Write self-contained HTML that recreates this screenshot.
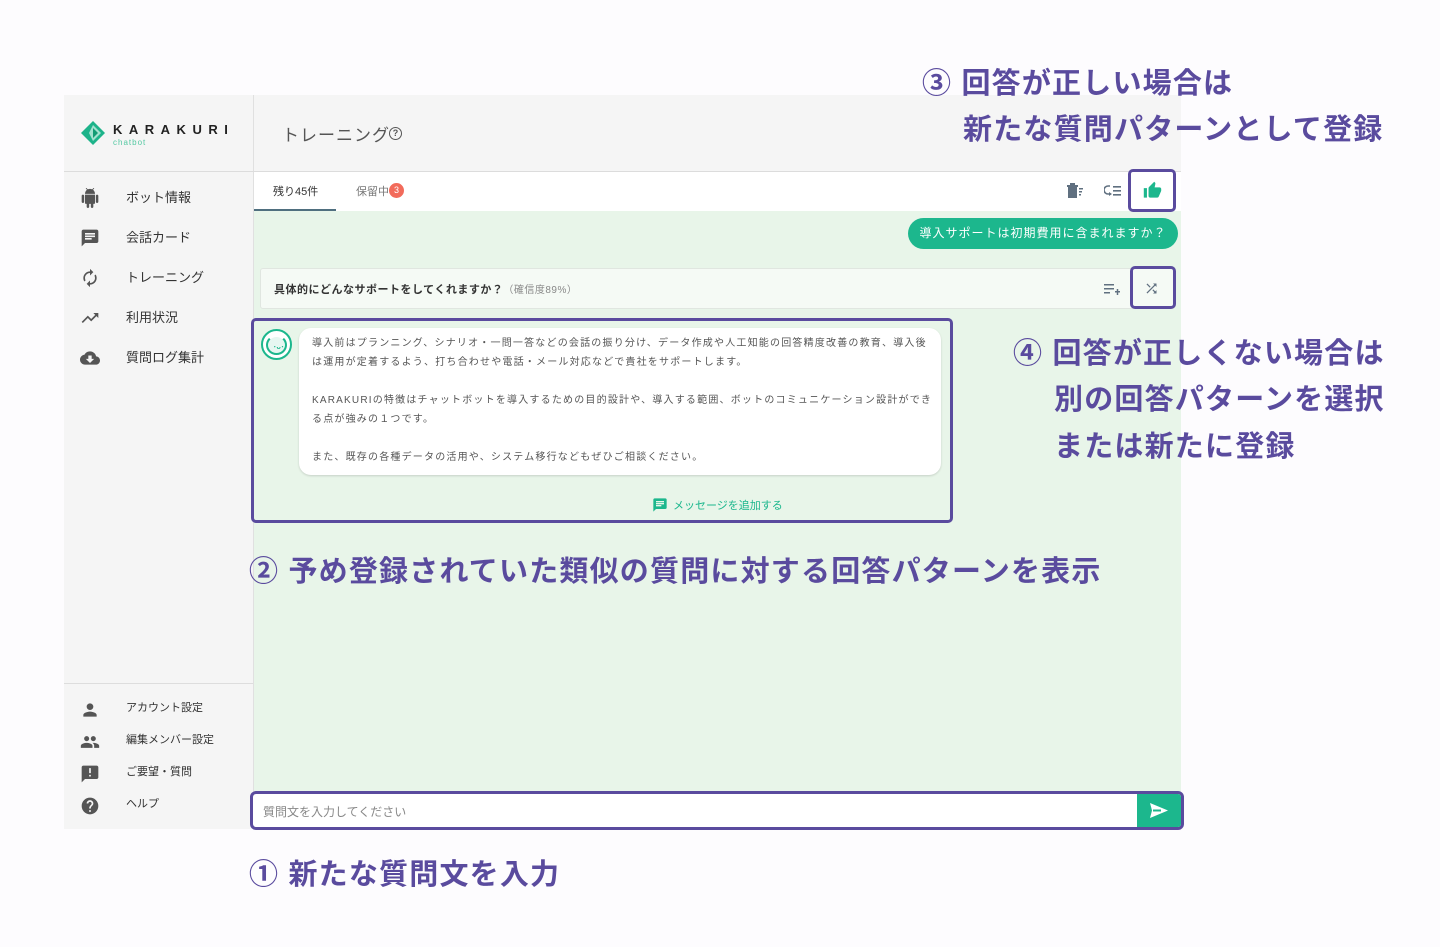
<!DOCTYPE html>
<html><head><meta charset="utf-8"><style>
*{box-sizing:border-box;margin:0;padding:0}
body{width:1440px;height:947px;background:#fdfcfe;position:relative;overflow:hidden;font-family:"Liberation Sans","Noto Sans CJK JP",sans-serif;color:#444}
.a{position:absolute}
.ann{position:absolute;color:#5a4b9e;font-weight:bold;font-size:29px;white-space:nowrap;letter-spacing:1.2px}
.nav{position:absolute;left:0;font-size:13px;color:#333}
.nav svg{position:absolute;left:16px;top:0px}
.nav span{position:absolute;left:62px;top:-1px;white-space:nowrap}
.box{position:absolute;border:3px solid #5a4b9e;border-radius:5px}
</style></head><body>
<div class="a" style="left:64px;top:95px;width:1117px;height:734px;background:#f5f5f5"></div>
<div class="a" style="left:253px;top:95px;width:1px;height:734px;background:#e0e0e0"></div>
<div class="a" style="left:64px;top:171px;width:1117px;height:1px;background:#dcdcdc"></div>
<div class="a" style="left:254px;top:172px;width:927px;height:39px;background:#fff"></div>
<div class="a" style="left:254px;top:211px;width:927px;height:618px;background:#e8f5e9"></div>
<div class="a" style="left:254px;top:209px;width:82px;height:2px;background:#4f6f7f"></div>
<svg class="a" style="left:80px;top:120px" width="26" height="26" viewBox="0 0 26 26"><polygon points="13,1 25,13 13,25 1,13" fill="#1db38a"/><polygon points="13,5 21,13 13,21 9,13" fill="#fff" opacity=".6"/><polygon points="13,8 18,13 13,18" fill="#139b74"/></svg>
<div class="a" style="left:113px;top:122px;font-size:13px;letter-spacing:6.5px;color:#222;font-weight:bold">KARAKURI</div>
<div class="a" style="left:113px;top:138px;font-size:8px;color:#55c9a3;letter-spacing:1px">chatbot</div>
<div class="a" style="left:282px;top:121px;font-size:17px;color:#555;letter-spacing:1px">トレーニング</div>
<div class="a" style="left:389px;top:127px;width:13px;height:13px;border:1.5px solid #555;border-radius:50%;font-size:9px;text-align:center;line-height:10px;color:#555;font-weight:bold">?</div>
<div class="nav" style="top:188px;left:64px"><svg width="20" height="20" viewBox="0 0 24 24"><path fill="#555" d="M6 18c0 .55.45 1 1 1h1v3.5c0 .83.67 1.5 1.5 1.5s1.5-.67 1.5-1.5V19h2v3.5c0 .83.67 1.5 1.5 1.5s1.5-.67 1.5-1.5V19h1c.55 0 1-.45 1-1V8H6v10zM3.5 8C2.67 8 2 8.67 2 9.5v7c0 .83.67 1.5 1.5 1.5S5 17.33 5 16.5v-7C5 8.67 4.33 8 3.5 8zm17 0c-.83 0-1.5.67-1.5 1.5v7c0 .83.67 1.5 1.5 1.5s1.5-.67 1.5-1.5v-7c0-.83-.67-1.5-1.5-1.5zm-4.97-5.84l1.3-1.3c.2-.2.2-.51 0-.71-.2-.2-.51-.2-.71 0l-1.48 1.48C13.85 1.23 12.95 1 12 1c-.96 0-1.86.23-2.66.63L7.85.15c-.2-.2-.51-.2-.71 0-.2.2-.2.51 0 .71l1.31 1.31C6.97 3.26 6 5.01 6 7h12c0-1.99-.97-3.75-2.47-4.84z"/></svg><span>ボット情報</span></div>
<div class="nav" style="top:228px;left:64px"><svg width="20" height="20" viewBox="0 0 24 24"><path fill="#555" d="M20 2H4c-1.1 0-2 .9-2 2v18l4-4h14c1.1 0 2-.9 2-2V4c0-1.1-.9-2-2-2zM6 9h12v2H6V9zm8 5H6v-2h8v2zm4-6H6V6h12v2z"/></svg><span>会話カード</span></div>
<div class="nav" style="top:268px;left:64px"><svg width="20" height="20" viewBox="0 0 24 24"><path fill="#555" d="M12 6v3l4-4-4-4v3c-4.42 0-8 3.58-8 8 0 1.57.46 3.03 1.24 4.26L6.7 14.8c-.45-.83-.7-1.79-.7-2.8 0-3.31 2.69-6 6-6zm6.76 1.74L17.3 9.2c.44.84.7 1.79.7 2.8 0 3.31-2.69 6-6 6v-3l-4 4 4 4v-3c4.42 0 8-3.58 8-8 0-1.57-.46-3.03-1.24-4.26z"/></svg><span>トレーニング</span></div>
<div class="nav" style="top:308px;left:64px"><svg width="20" height="20" viewBox="0 0 24 24"><path fill="#555" d="M16 6l2.29 2.29-4.88 4.88-4-4L2 16.59 3.41 18l6-6 4 4 6.3-6.29L22 12V6z"/></svg><span>利用状況</span></div>
<div class="nav" style="top:348px;left:64px"><svg width="20" height="20" viewBox="0 0 24 24"><path fill="#555" d="M19.35 10.04C18.67 6.59 15.64 4 12 4 9.11 4 6.6 5.64 5.35 8.04 2.34 8.36 0 10.91 0 14c0 3.31 2.69 6 6 6h13c2.76 0 5-2.24 5-5 0-2.64-2.05-4.78-4.65-4.96zM17 13l-5 5-5-5h3V9h4v4h3z"/></svg><span>質問ログ集計</span></div>
<div class="a" style="left:64px;top:683px;width:189px;height:1px;background:#ddd"></div>
<div class="nav" style="top:700px;left:64px;font-size:11px"><svg width="20" height="20" viewBox="0 0 24 24"><path fill="#555" d="M12 12c2.21 0 4-1.79 4-4s-1.79-4-4-4-4 1.79-4 4 1.79 4 4 4zm0 2c-2.67 0-8 1.34-8 4v2h16v-2c0-2.66-5.33-4-8-4z"/></svg><span>アカウント設定</span></div>
<div class="nav" style="top:732px;left:64px;font-size:11px"><svg width="20" height="20" viewBox="0 0 24 24"><path fill="#555" d="M16 11c1.66 0 2.99-1.34 2.99-3S17.66 5 16 5c-1.66 0-3 1.34-3 3s1.34 3 3 3zm-8 0c1.66 0 2.99-1.34 2.99-3S9.66 5 8 5C6.34 5 5 6.34 5 8s1.34 3 3 3zm0 2c-2.33 0-7 1.17-7 3.5V19h14v-2.5c0-2.33-4.67-3.5-7-3.5zm8 0c-.29 0-.62.02-.97.05 1.16.84 1.97 1.97 1.97 3.45V19h6v-2.5c0-2.33-4.67-3.5-7-3.5z"/></svg><span>編集メンバー設定</span></div>
<div class="nav" style="top:764px;left:64px;font-size:11px"><svg width="20" height="20" viewBox="0 0 24 24"><path fill="#555" d="M20 2H4c-1.1 0-2 .9-2 2v18l4-4h14c1.1 0 2-.9 2-2V4c0-1.1-.9-2-2-2zm-7 9h-2V5h2v6zm0 4h-2v-2h2v2z"/></svg><span>ご要望・質問</span></div>
<div class="nav" style="top:796px;left:64px;font-size:11px"><svg width="20" height="20" viewBox="0 0 24 24"><path fill="#555" d="M12 2C6.48 2 2 6.48 2 12s4.48 10 10 10 10-4.48 10-10S17.52 2 12 2zm1 17h-2v-2h2v2zm2.07-7.75l-.9.92C13.45 12.9 13 13.5 13 15h-2v-.5c0-1.1.45-2.1 1.17-2.83l1.24-1.26c.37-.36.59-.86.59-1.41 0-1.1-.9-2-2-2s-2 .9-2 2H8c0-2.21 1.79-4 4-4s4 1.79 4 4c0 .88-.36 1.68-.93 2.25z"/></svg><span>ヘルプ</span></div>
<div class="a" style="left:273px;top:183px;font-size:11px;color:#333">残り45件</div>
<div class="a" style="left:356px;top:183px;font-size:11px;color:#777">保留中</div>
<div class="a" style="left:389px;top:183px;width:15px;height:15px;border-radius:50%;background:#f26b5b;color:#fff;font-size:9px;text-align:center;line-height:15px">3</div>
<svg class="a" style="left:1066px;top:183px" width="18" height="16" viewBox="0 0 18 16"><path fill="#607080" d="M1 2h11v2H1zM4 0h5v2H4zM2 4h9v11H2z"/><path fill="#607080" d="M13 5h4v1.5h-4zM13 8h3v1.5h-3zM13 11h2v1.5h-2z"/></svg>
<svg class="a" style="left:1104px;top:183px" width="18" height="16" viewBox="0 0 18 16"><path fill="none" stroke="#607080" stroke-width="1.6" d="M6 3H4a4 4 0 0 0 0 8h2"/><path fill="#607080" d="M5 9l3 2-3 2zM9 3h8v1.6H9zM9 7h8v1.6H9zM9 11h8v1.6H9z"/></svg>
<div class="box" style="left:1128px;top:169px;width:48px;height:43px"></div>
<svg class="a" style="left:1143px;top:181px" width="19" height="19" viewBox="0 0 24 24"><path fill="#1cb78d" d="M1 21h4V9H1v12zm22-11c0-1.1-.9-2-2-2h-6.31l.95-4.57.03-.32c0-.41-.17-.79-.44-1.06L14.17 1 7.59 7.59C7.22 7.95 7 8.45 7 9v10c0 1.1.9 2 2 2h9c.83 0 1.54-.5 1.84-1.22l3.02-7.05c.09-.23.14-.47.14-.73v-2z"/></svg>
<div class="a" style="left:908px;top:218px;width:270px;height:31px;border-radius:16px;background:#1cb78d;color:#fff;font-size:12px;line-height:31px;text-align:center;letter-spacing:1px">導入サポートは初期費用に含まれますか？</div>
<div class="a" style="left:260px;top:268px;width:915px;height:41px;background:#f5faf5;border:1px solid #e0e6e0;border-radius:3px"></div>
<div class="a" style="left:274px;top:281px;font-size:11px;color:#333;font-weight:bold;letter-spacing:.5px">具体的にどんなサポートをしてくれますか？<span style="font-weight:normal;color:#888;font-size:10px">（確信度89%）</span></div>
<svg class="a" style="left:1103px;top:282px" width="18" height="14" viewBox="0 0 18 14"><path fill="#607080" d="M1 2h10v1.5H1zM1 6h10v1.5H1zM1 10h6v1.5H1zM12 9h5v1.5h-5zM13.75 7h1.5v6h-1.5z"/></svg>
<div class="box" style="left:1130px;top:266px;width:46px;height:43px"></div>
<svg class="a" style="left:1144px;top:281px" width="15" height="15" viewBox="0 0 24 24"><path fill="#607080" d="M10.59 9.17L5.41 4 4 5.41l5.17 5.17 1.42-1.41zM14.5 4l2.04 2.04L4 18.59 5.41 20 17.96 7.46 20 9.5V4h-5.5zm.33 9.41l-1.41 1.41 3.13 3.13L14.5 20H20v-5.5l-2.04 2.04-3.13-3.13z"/></svg>
<div class="box" style="left:251px;top:318px;width:702px;height:205px"></div>
<div class="a" style="left:261px;top:329px;width:31px;height:31px;border-radius:50%;border:2px solid #1cb78d;background:#fff"></div>
<div class="a" style="left:266px;top:335px;width:21px;height:20px;border-radius:50%;background:#e6f7f1;border:2px solid #1cb78d;border-top-color:#fff"></div>
<div class="a" style="left:273px;top:342px;font-size:7px;color:#1cb78d;font-weight:bold">･ᴗ･</div>
<div class="a" style="left:299px;top:328px;width:642px;height:147px;background:#fff;border-radius:12px;box-shadow:0 1px 2px rgba(0,0,0,.15)"></div>
<div class="a" style="left:312px;top:334px;width:624px;font-size:10px;line-height:19px;color:#555;letter-spacing:1.2px">導入前はプランニング、シナリオ・一問一答などの会話の振り分け、データ作成や人工知能の回答精度改善の教育、導入後は運用が定着するよう、打ち合わせや電話・メール対応などで貴社をサポートします。<br><br>KARAKURIの特徴はチャットボットを導入するための目的設計や、導入する範囲、ボットのコミュニケーション設計ができる点が強みの１つです。<br><br>また、既存の各種データの活用や、システム移行などもぜひご相談ください。</div>
<svg class="a" style="left:652px;top:497px" width="16" height="16" viewBox="0 0 24 24"><path fill="#1cb78d" d="M20 2H4c-1.1 0-2 .9-2 2v18l4-4h14c1.1 0 2-.9 2-2V4c0-1.1-.9-2-2-2zM6 9h12v2H6V9zm8 5H6v-2h8v2zm4-6H6V6h12v2z"/></svg>
<div class="a" style="left:673px;top:497px;font-size:11px;color:#1cb78d">メッセージを追加する</div>
<div class="a" style="left:250px;top:791px;width:934px;height:39px;border:3px solid #5a4b9e;border-radius:6px;background:#fff;overflow:hidden">
<div class="a" style="left:10px;top:9px;font-size:12px;color:#888">質問文を入力してください</div>
<div class="a" style="right:0;top:0;width:44px;height:33px;background:#1cb78d"></div>
<svg class="a" style="right:13px;top:9px" width="18" height="15" viewBox="0 0 18 15"><path fill="#fff" d="M0 0l18 7.5L0 15l2-7.5z"/><path fill="#1cb78d" d="M3 6.5h8v2H3z"/></svg>
</div>
<div class="ann" style="left:922px;top:60px">③ 回答が正しい場合は</div>
<div class="ann" style="left:963px;top:106px">新たな質問パターンとして登録</div>
<div class="ann" style="left:1013px;top:330px">④ 回答が正しくない場合は</div>
<div class="ann" style="left:1054px;top:376px">別の回答パターンを選択</div>
<div class="ann" style="left:1054px;top:423px">または新たに登録</div>
<div class="ann" style="left:249px;top:548px">② 予め登録されていた類似の質問に対する回答パターンを表示</div>
<div class="ann" style="left:249px;top:851px">① 新たな質問文を入力</div>
</body></html>
